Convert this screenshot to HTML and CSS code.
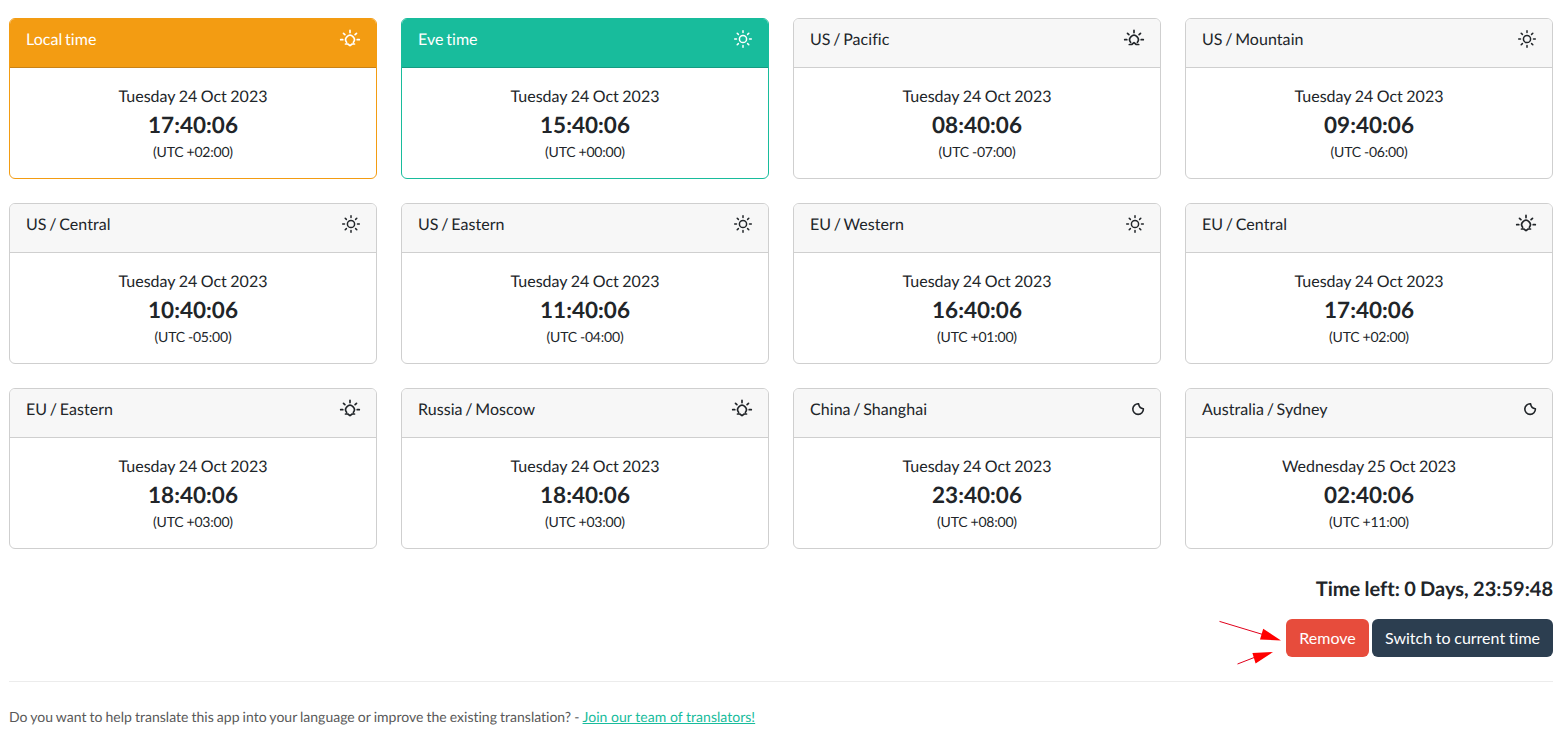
FILE: index.html
```html
<!DOCTYPE html>
<html lang="en">
<head>
<meta charset="utf-8">
<title>Time zones</title>
<link rel="stylesheet" href="styles.css">
</head>
<body>
<svg class="sprite" aria-hidden="true">
  <symbol id="sun" viewBox="0 0 24 24">
    <circle cx="12" cy="12" r="3.6"/>
    <path d="M12 3.7v1.8M12 18.5v1.8M3.7 12h1.8M18.5 12h1.8M6.2 6.2l1.2 1.2M16.6 16.6l1.2 1.2M17.8 6.2l-1.2 1.2M7.4 16.6l-1.2 1.2"/>
  </symbol>
  <symbol id="sunset" viewBox="0 0 24 24">
    <path d="M8.6 15.3a4.3 4.3 0 1 1 6.8 0M7.5 17h2.3l2.2 1.7 2.2-1.7h2.3M12 3.4v2.2M2.7 12.7h2.1M19.2 12.7h2.1M5.5 6.3l1.4 1.4M18.5 6.3l-1.4 1.4"/>
  </symbol>
  <symbol id="sunrise" viewBox="0 0 24 24">
    <path d="M8.6 15.3a4.3 4.3 0 1 1 6.8 0M7.3 17.5h2.4l2.3-1.9 2.3 1.9h2.4M12 3.4v2.2M2.7 12.7h2.1M19.2 12.7h2.1M5.5 6.3l1.4 1.4M18.5 6.3l-1.4 1.4"/>
  </symbol>
  <symbol id="moon" viewBox="0 0 24 24">
    <path d="M12.6 6.8A5.3 5.3 0 1 0 17.4 11.8Q13.2 11.2 12.6 6.8z"/>
  </symbol>
</svg>
<main>
  <section class="grid">
    <article class="card local"><header><span>Local time</span><svg class="icon wide"><use href="#sunset"/></svg></header><div class="body"><p>Tuesday 24 Oct 2023</p><h4>17:40:06</h4><small>(UTC +02:00)</small></div></article>
    <article class="card eve"><header><span>Eve time</span><svg class="icon"><use href="#sun"/></svg></header><div class="body"><p>Tuesday 24 Oct 2023</p><h4>15:40:06</h4><small>(UTC +00:00)</small></div></article>
    <article class="card"><header><span>US / Pacific</span><svg class="icon wide"><use href="#sunrise"/></svg></header><div class="body"><p>Tuesday 24 Oct 2023</p><h4>08:40:06</h4><small>(UTC -07:00)</small></div></article>
    <article class="card"><header><span>US / Mountain</span><svg class="icon"><use href="#sun"/></svg></header><div class="body"><p>Tuesday 24 Oct 2023</p><h4>09:40:06</h4><small>(UTC -06:00)</small></div></article>
    <article class="card"><header><span>US / Central</span><svg class="icon"><use href="#sun"/></svg></header><div class="body"><p>Tuesday 24 Oct 2023</p><h4>10:40:06</h4><small>(UTC -05:00)</small></div></article>
    <article class="card"><header><span>US / Eastern</span><svg class="icon"><use href="#sun"/></svg></header><div class="body"><p>Tuesday 24 Oct 2023</p><h4>11:40:06</h4><small>(UTC -04:00)</small></div></article>
    <article class="card"><header><span>EU / Western</span><svg class="icon"><use href="#sun"/></svg></header><div class="body"><p>Tuesday 24 Oct 2023</p><h4>16:40:06</h4><small>(UTC +01:00)</small></div></article>
    <article class="card"><header><span>EU / Central</span><svg class="icon wide"><use href="#sunset"/></svg></header><div class="body"><p>Tuesday 24 Oct 2023</p><h4>17:40:06</h4><small>(UTC +02:00)</small></div></article>
    <article class="card"><header><span>EU / Eastern</span><svg class="icon wide"><use href="#sunset"/></svg></header><div class="body"><p>Tuesday 24 Oct 2023</p><h4>18:40:06</h4><small>(UTC +03:00)</small></div></article>
    <article class="card"><header><span>Russia / Moscow</span><svg class="icon wide"><use href="#sunset"/></svg></header><div class="body"><p>Tuesday 24 Oct 2023</p><h4>18:40:06</h4><small>(UTC +03:00)</small></div></article>
    <article class="card"><header><span>China / Shanghai</span><svg class="icon night"><use href="#moon"/></svg></header><div class="body"><p>Tuesday 24 Oct 2023</p><h4>23:40:06</h4><small>(UTC +08:00)</small></div></article>
    <article class="card"><header><span>Australia / Sydney</span><svg class="icon night"><use href="#moon"/></svg></header><div class="body"><p>Wednesday 25 Oct 2023</p><h4>02:40:06</h4><small>(UTC +11:00)</small></div></article>
  </section>
  <h5 class="left">Time left: 0 Days, 23:59:48</h5>
  <div class="actions">
    <svg class="arrows" viewBox="0 0 64 46" aria-hidden="true">
      <path class="shaft" d="M.5 2.4L43.5 15.4M18.5 45L35.5 38.4"/>
      <path class="head" d="M44.2 9.8L41 20.4 62 21.4zM33.4 34L36.6 44.4 54 33z"/>
    </svg>
    <button class="btn danger">Remove</button>
    <button class="btn primary">Switch to current time</button>
  </div>
</main>
<footer>Do you want to help translate this app into your language or improve the existing translation? - <a href="#">Join our team of translators!</a></footer>
</body>
</html>
```
FILE: styles.css
```css
* { box-sizing: border-box; }
body {
  margin: 0;
  padding: 18px 7px 0 9px;
  background: #fff;
  color: #212529;
  font: 400 16px/24px Lato, "Liberation Sans", sans-serif;
  font-variant-ligatures: none;
  text-rendering: geometricPrecision;
  word-spacing: -0.8px;
  overflow: hidden;
}
p, h4, h5 { margin: 0; }
.sprite { display: none; }
.grid {
  display: grid;
  grid-template-columns: repeat(4, 368px);
  gap: 24px;
}
.card {
  height: 161px;
  border: 1px solid #cfcfcf;
  border-radius: 6px;
  overflow: hidden;
}
.card header {
  display: flex;
  justify-content: space-between;
  height: 49px;
  padding: 8px 13px 0 16px;
  background: #f7f7f7;
  border-bottom: 1px solid #cfcfcf;
}
.card header span { padding-top: 1px; word-spacing: -1.5px; letter-spacing: 0.06px; }
.local { border-color: #f39c12; }
.local header { background: #f39c12; border-color: #c98216; color: #fff; }
.eve { border-color: #18bc9c; }
.eve header { background: #18bc9c; border-color: #159b82; color: #fff; }
.icon {
  width: 24px;
  height: 24px;
  fill: none;
  stroke: currentColor;
  stroke-width: 1.5;
  stroke-linecap: round;
  stroke-linejoin: round;
}
.wide { margin-right: 1px; stroke-width: 1.7; }
.night { margin-right: -3px; stroke-width: 1.6; }
.body {
  display: flex;
  flex-direction: column;
  align-items: center;
  padding-top: 17px;
}
.body p { word-spacing: -0.6px; }
.body h4 { margin-top: 3px; font-size: 22.5px; line-height: 26px; font-weight: 700; }
.body small { margin-top: 3px; font-size: 14px; line-height: 21px; letter-spacing: -0.2px; word-spacing: -0.4px; }
.left {
  margin-top: 28px;
  text-align: right;
  font-size: 20px;
  line-height: 24px;
  font-weight: 700;
  word-spacing: -0.5px;
}
.actions {
  display: flex;
  justify-content: flex-end;
  gap: 3px;
  margin-top: 18px;
}
.arrows { width: 64px; height: 46px; margin-bottom: -8px; }
.shaft { fill: none; stroke: #e0001b; stroke-width: 1; }
.head { fill: #f00; }
.btn {
  height: 38px;
  padding: 0;
  border: 0;
  border-radius: 6px;
  color: #fff;
  font: inherit;
  word-spacing: -0.4px;
}
.danger { width: 83px; background: #e74c3c; }
.primary { width: 181px; background: #2c3e50; }
footer {
  margin-top: 24px;
  padding-top: 23px;
  border-top: 1px solid #ececec;
  color: #595959;
  font-size: 14px;
  word-spacing: -0.48px;
}
footer a { color: #18bc9c; word-spacing: 0; letter-spacing: 0.03px; }
```
